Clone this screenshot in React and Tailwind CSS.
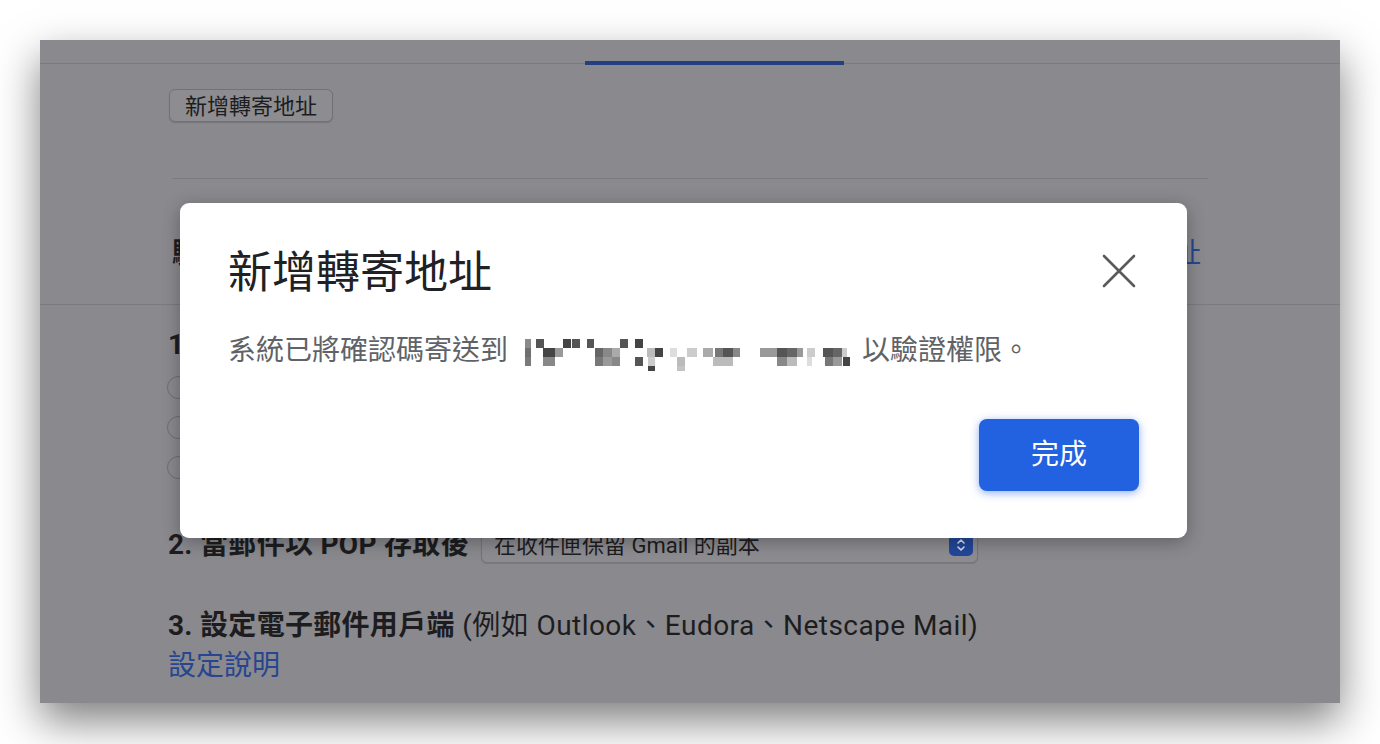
const pixels = [
  // [absX, row, w, color]
  [525, 0, 6, '#8a8a8a'], [525, 1, 6, '#6f6f6f'], [525, 2, 6, '#7a7a7a'],
  [536, 0, 8, '#555'], [563, 0, 8, '#444'], [572, 0, 8, '#555'],
  [543, 1, 12, '#444'], [555, 1, 8, '#999'], [543, 2, 12, '#888'],
  [587, 0, 7, '#555'], [620, 0, 8, '#555'],
  [595, 1, 8, '#666'], [603, 1, 9, '#888'], [612, 1, 8, '#aaa'],
  [595, 2, 8, '#777'], [603, 2, 9, '#999'], [612, 2, 8, '#888'],
  [635, 0, 8, '#444'], [647, 1, 8, '#bbb'], [655, 1, 8, '#444'],
  [635, 2, 8, '#555'], [648, 2, 7, '#ccc'], [648, 3, 7, '#444'],
  [670, 1, 7, '#ddd'], [687, 1, 10, '#ccc'], [677, 2, 8, '#bbb'], [677, 3, 8, '#c4c4c4'],
  [703, 1, 10, '#aaa'], [715, 1, 8, '#777'], [723, 1, 10, '#555'], [733, 1, 7, '#888'],
  [713, 2, 20, '#bbb'],
  [760, 1, 17, '#999'], [777, 1, 10, '#555'], [787, 1, 10, '#666'], [797, 1, 6, '#999'],
  [807, 1, 8, '#ccc'], [777, 2, 10, '#888'], [787, 2, 10, '#bbb'], [807, 2, 5, '#ddd'],
  [823, 1, 10, '#555'], [833, 1, 9, '#666'], [842, 1, 5, '#ccc'],
  [825, 2, 8, '#777'], [833, 2, 9, '#999'], [843, 2, 7, '#444'],
]

function Redacted() {
  return (
    <svg width="354" height="40" viewBox="0 0 354 40" className="shrink-0">
      {pixels.map(([x, r, w, c], i) => (
        <rect key={i} x={x - 508} y={8 + r * 9} width={w} height={r === 3 ? 7 : 9} fill={c} />
      ))}
    </svg>
  )
}

function Radio() {
  return (
    <div className="flex h-[40px] items-center pl-[127px]">
      <span className="h-[23px] w-[23px] rounded-full border-[1.5px] border-[#6d6c71]" />
    </div>
  )
}

export default function App() {
  return (
    <div className="h-[744px] w-[1380px] overflow-hidden bg-white p-[40px] font-['Roboto','Noto_Sans_CJK_TC',sans-serif]">
      <div className="relative h-[663px] w-[1300px] overflow-hidden bg-[#8a898e] shadow-[0_18px_40px_rgba(0,0,0,0.5)]">
        {/* tabs */}
        <div className="flex h-[24px] items-end border-b border-[#7b7a7f]">
          <div className="ml-[545px] h-[4px] w-[259px] translate-y-[2px] bg-[#223f7f]" />
        </div>

        <button className="ml-[129px] mt-[25px] flex h-[33px] items-center rounded-[6px] border border-[#727176] bg-[#8d8c91] px-[15px] pt-[1px] text-[22px] text-[#1d1d20] shadow-[0_1px_1px_rgba(0,0,0,0.15)]">
          新增轉寄地址
        </button>

        <div className="ml-[132px] mt-[56px] h-px w-[1036px] bg-[#7b7a7f]" />

        <div className="ml-[132px] mt-[55px] flex h-[40px] w-[1029px] items-center justify-between text-[28px]">
          <span className="font-bold text-[#1d1d20]">驗</span>
          <span className="text-[#27468f]">址</span>
        </div>

        <div className="mt-[30px] h-px bg-[#7b7a7f]" />

        <div className="ml-[128px] mt-[20px] h-[40px] text-[28px] font-bold leading-[40px] text-[#1d1d20]">1.</div>
        <div className="mt-[2px]">
          <Radio />
          <Radio />
          <Radio />
        </div>

        <div className="ml-[128px] mt-[40px] flex h-[36px] items-center">
          <span className="text-[28px] font-bold tracking-[0.3px] text-[#1d1d20]">2. 當郵件以 POP 存取後</span>
          <div className="ml-[12px] flex h-[36px] w-[497px] items-center justify-between rounded-[6px] border border-[#76757a] bg-[#8d8c91] pl-[12px] pr-[4px] text-[22px] text-[#1d1d20] shadow-[0_1px_1px_rgba(0,0,0,0.12)]">
            <span>在收件匣保留 Gmail 的副本</span>
            <span className="flex h-[22px] w-[24px] items-center justify-center rounded-[5px] bg-[#23479b]">
              <svg width="12" height="16" viewBox="0 0 12 16" fill="none" stroke="#d8dff0" strokeWidth="1.6" strokeLinecap="round" strokeLinejoin="round">
                <path d="M3 6l3-3 3 3M3 10l3 3 3-3" />
              </svg>
            </span>
          </div>
        </div>

        <div className="ml-[128px] mt-[43px] text-[28px] leading-[40px] text-[#1d1d20]">
          <span className="font-bold tracking-[0.3px]">3. 設定電子郵件用戶端</span>
          <span className="tracking-[0.45px]"> (例如 Outlook、Eudora、Netscape Mail)</span>
        </div>
        <div className="ml-[128px] text-[28px] leading-[40px] text-[#27468f]">設定說明</div>

        {/* dialog */}
        <div className="absolute left-[140px] top-[163px] h-[335px] w-[1007px] rounded-[9px] bg-white shadow-[0_4px_18px_rgba(0,0,0,0.3)]">
          <div className="flex justify-between pl-[48px] pr-[44px] pt-[42px]">
            <h2 className="text-[44px] font-normal leading-[56px] text-[#202124]">新增轉寄地址</h2>
            <button className="mt-[2px] flex h-[48px] w-[48px] items-center justify-center">
              <svg width="34" height="34" viewBox="0 0 34 34" fill="none" stroke="#5a5a5c" strokeWidth="2.6" strokeLinecap="round">
                <path d="M2 2l30 30M32 2L2 32" />
              </svg>
            </button>
          </div>
          <div className="mt-[30px] flex h-[40px] items-start pl-[48px] text-[28px] leading-[40px] text-[#5f6368]">
            <span>系統已將確認碼寄送到</span>
            <Redacted />
            <span>以驗證權限。</span>
          </div>
          <div className="mt-[48px] flex justify-end pr-[48px]">
            <button className="h-[72px] w-[160px] rounded-[8px] bg-[#2261df] text-[28px] text-white shadow-[0_2px_8px_rgba(34,97,223,0.5)]">
              完成
            </button>
          </div>
        </div>
      </div>
    </div>
  )
}
